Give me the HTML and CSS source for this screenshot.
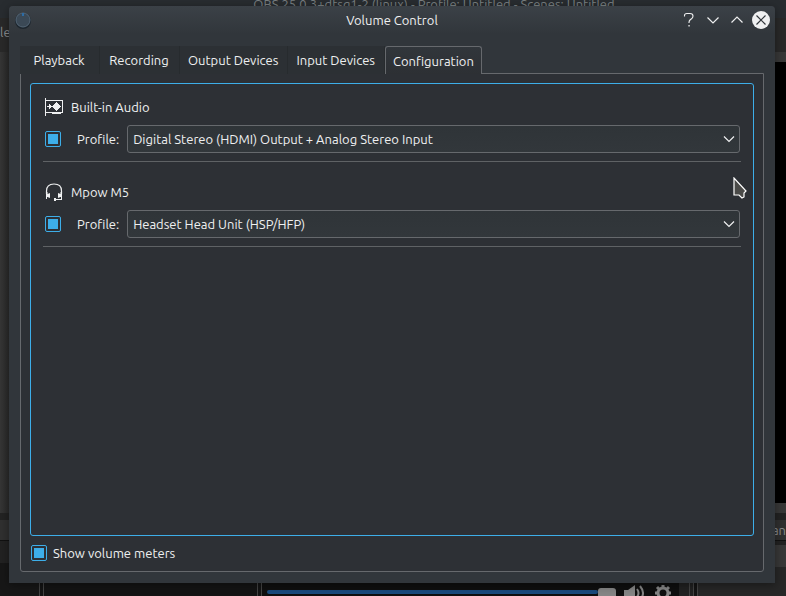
FILE: index.html
```html
<!DOCTYPE html>
<html lang="en">
<head>
<meta charset="utf-8">
<title>Volume Control</title>
<link rel="stylesheet" href="styles.css">
</head>
<body>
<div class="backdrop">
  <div class="back-title">OBS 25.0.3+dtsg1-2 (linux) - Profile: Untitled - Scenes: Untitled</div>
  <div class="back-menu">le</div>
  <div class="back-main">
    <div class="back-left"></div>
    <div class="back-preview"></div>
  </div>
  <div class="back-gap"></div>
  <div class="back-heads"><span>an</span></div>
  <div class="back-docks">
    <div class="dock dock-scenes"></div>
    <div class="dock dock-sources"></div>
    <div class="dock dock-mixer">
      <div class="track"></div>
      <div class="handle"></div>
      <svg class="speaker" width="24" height="18" viewBox="0 0 24 18"><path d="M1 6h4l7-5v16l-7-5H1z" fill="#858585"/><path d="M14 5q3 4 0 8M17 2q6 7 0 14" fill="none" stroke="#858585" stroke-width="2"/></svg>
      <svg class="gear" width="18" height="18" viewBox="0 0 18 18"><circle cx="9" cy="9" r="5" fill="none" stroke="#858585" stroke-width="3"/><path d="M9 1v3M9 14v3M1 9h3M14 9h3M3 3l2.500 2.500M12.500 12.500l2.500 2.500M15 3l-2.500 2.500M5.500 12.500l-2.500 2.500" stroke="#858585" stroke-width="3"/></svg>
      <div class="scroll"></div>
    </div>
    <div class="dock dock-transitions"></div>
    <div class="dock dock-controls"></div>
  </div>
</div>

<main class="window">
  <header class="titlebar">
    <svg class="app-icon" width="18" height="18" viewBox="0 0 18 18"><circle cx="9" cy="10" r="8" fill="#1d262e"/><circle cx="9" cy="9" r="7" fill="#3b4956" stroke="#536575"/><path d="M9 2v3" stroke="#2d6ca5" stroke-width="2"/></svg>
    <h1>Volume Control</h1>
    <div class="window-buttons">
      <button aria-label="Help"><svg width="18" height="18" viewBox="0 0 18 18"><path d="M4.500 5.500V4.500Q4.500 2.500 7 2.500H10Q13 2.500 13 5Q13 6.500 11.500 7.800L10 9Q9 10 9 11.500V12" fill="none" stroke="#eff0f1" stroke-width="1.100"/><path d="M8.400 14h1.300v1.500h-1.300z" fill="#eff0f1"/></svg></button>
      <button aria-label="Minimize"><svg width="18" height="18" viewBox="0 0 18 18"><path d="M3.500 6.500L9 12l5.500-5.500" fill="none" stroke="#eff0f1" stroke-width="1.200"/></svg></button>
      <button aria-label="Maximize"><svg width="18" height="18" viewBox="0 0 18 18"><path d="M3.500 11.500L9 6l5.500 5.500" fill="none" stroke="#eff0f1" stroke-width="1.200"/></svg></button>
      <button aria-label="Close"><svg width="18" height="18" viewBox="0 0 18 18"><circle cx="9" cy="9" r="9" fill="#eff0f1"/><path d="M4.500 4.500l9 9M13.500 4.500l-9 9" stroke="#31363b" stroke-width="1.200"/></svg></button>
    </div>
  </header>

  <div class="tabs" role="tablist">
    <button class="tab" role="tab">Playback</button>
    <button class="tab" role="tab">Recording</button>
    <button class="tab" role="tab">Output Devices</button>
    <button class="tab" role="tab">Input Devices</button>
    <button class="tab active" role="tab" aria-selected="true">Configuration</button>
  </div>

  <section class="page">
    <div class="cards">
      <section class="card">
        <h2>
          <svg width="18" height="18" viewBox="0 0 18 18" shape-rendering="crispEdges"><path d="M0 0h1v18H0zM1 2h17v1H1zM17 2h1v12h-1zM1 14h17v1H1zM7 15h9v1H7zM2 8h14v1H2zM4 6h1v5H4zM5 7h1v3H5zM10 5h3v7h-3zM9 6h5v5H9zM8 7h7v3H8zM11 4h1v9h-1z" fill="#eff0f1"/></svg>
          Built-in Audio
        </h2>
        <div class="profile">
          <input type="checkbox" checked aria-label="Lock Built-in Audio">
          <label for="profile-1">Profile:</label>
          <div class="select">
            <select id="profile-1"><option>Digital Stereo (HDMI) Output + Analog Stereo Input</option></select>
            <svg width="12" height="8" viewBox="0 0 12 8"><path d="M1 1.500l5 5 5-5" fill="none" stroke="#eff0f1" stroke-width="1.200"/></svg>
          </div>
        </div>
      </section>
      <section class="card">
        <h2>
          <svg width="18" height="18" viewBox="0 0 18 18"><path d="M1.500 11V8Q1.500 1 9 1T16.500 8V11" fill="none" stroke="#eff0f1" stroke-width="1.200"/><path d="M1 9h1.500v2l2.500-1v5l-2.500-1H2v2H1zM17 9h-1.500v2L13 10v5l2.500-1H16v2h-5v-1H9v3h2v-1h6z" fill="#eff0f1"/></svg>
          Mpow M5
        </h2>
        <div class="profile">
          <input type="checkbox" checked aria-label="Lock Mpow M5">
          <label for="profile-2">Profile:</label>
          <div class="select">
            <select id="profile-2"><option>Headset Head Unit (HSP/HFP)</option></select>
            <svg width="12" height="8" viewBox="0 0 12 8"><path d="M1 1.500l5 5 5-5" fill="none" stroke="#eff0f1" stroke-width="1.200"/></svg>
          </div>
        </div>
      </section>
    </div>
    <label class="meters"><input type="checkbox" checked>Show volume meters</label>
  </section>
</main>

<svg class="cursor" width="14" height="22" viewBox="0 0 14 22"><path d="M1 1v17h5l3 3 2-1v-4l2-2z" fill="#4a4a48" stroke="#fff" stroke-width="1.200"/></svg>
</body>
</html>
```
FILE: styles.css
```css
* { box-sizing: border-box; }

body {
  margin: 0;
  height: 100vh;
  padding: 6px 11px 13px 9px;
  display: flex;
  overflow: hidden;
  background: #141414;
  color: #eff0f1;
  font: 13px/20px Ubuntu, "Noto Sans", sans-serif;
}

h1, h2 { margin: 0; font-size: 13px; font-weight: 400; }
svg { display: block; flex: none; }

button {
  padding: 0;
  border: 0;
  background: none;
  color: inherit;
  font: inherit;
}

/* Application behind the dialog */
.backdrop {
  position: absolute;
  inset: 0;
  display: flex;
  flex-direction: column;
  overflow: hidden;
  color: #8b8d8f;
}
.back-title {
  height: 18px;
  flex: none;
  background: #282c30;
  color: #7a8082;
  line-height: 8px;
  text-align: center;
  padding-left: 82px;
}
.back-menu { height: 34px; flex: none; background: #292929; line-height: 28px; }
.back-main { flex: 1; display: flex; justify-content: space-between; background: #383838; }
.back-left { width: 9px; background: linear-gradient(90deg, #363636, #2a2a2a); }
.back-preview { width: 50%; margin: 10px 0; background: #000; }
.back-gap { height: 7px; flex: none; background: #232323; }
.back-heads { height: 20px; flex: none; background: #303030; text-align: right; }
.back-docks { height: 56px; flex: none; display: flex; background: #141414; border-top: 1px solid #111; }
.dock { border-right: 1px solid #444; }
.dock-scenes { width: 40px; background: linear-gradient(#222 22px, #171717 22px); }
.dock-sources { width: 215px; margin-left: 3px; border-left: 1px solid #444; }
.dock-mixer {
  flex: 1;
  display: flex;
  align-items: center;
  gap: 7px;
  margin-left: 3px;
  padding: 47px 0 0 5px;
  border-left: 1px solid #444;
  background: #0f0f0f;
}
.track { flex: 1; height: 4px; border-radius: 2px; background: #194a7d; }
.handle { width: 18px; height: 12px; margin: 3px 0 0 -7px; border-radius: 3px; background: #858585; }
.speaker, .gear { margin-top: 2px; }
.scroll { width: 10px; height: 20px; background: #222; }
.dock-transitions { width: 4px; background: #222; }
.dock-controls { width: 89px; margin-left: 3px; border: 0; border-left: 1px solid #444; background: linear-gradient(#222 4px, #383838 4px, #383838 26px, #272727 26px); }

/* Dialog */
.window {
  position: relative;
  flex: 1;
  display: flex;
  flex-direction: column;
  padding: 0 11px 11px;
  border-radius: 4px 4px 0 0;
  background: linear-gradient(#3b4147, #31363b 28px);
  box-shadow: 0 2px 10px rgba(0, 0, 0, .4);
}
.titlebar {
  display: grid;
  grid-template-columns: 1fr auto 1fr;
  align-items: center;
  height: 28px;
  margin: 0 -6px 12px;
}
.window-buttons { display: flex; justify-content: flex-end; gap: 6px; }

.tabs { display: flex; height: 28px; margin-bottom: -1px; position: relative; }
.tab {
  min-width: 80px;
  padding: 0 9px 0 8px;
  border-right: 1px solid #272b2e;
  background: #2c3034;
}
.tab.active {
  border: 1px solid #66696d;
  border-bottom: 0;
  border-radius: 3px 3px 0 0;
  padding: 0 7px;
  background: linear-gradient(#31363b, #2d3034);
}

.page {
  flex: 1;
  display: flex;
  flex-direction: column;
  padding: 9px 9px 8px;
  border: 1px solid #66696d;
  border-radius: 0 0 3px 3px;
  background: #2d3035;
}
.cards {
  flex: 1;
  padding: 13px 12px;
  border: 1px solid #3daee9;
  border-radius: 3px;
}
.card { padding-bottom: 8px; margin-bottom: 20px; border-bottom: 1px solid #5f6265; }
.card h2 { display: flex; align-items: center; gap: 8px; padding-left: 2px; line-height: 20px; }
.profile { display: flex; align-items: center; margin-top: 8px; padding: 0 1px 0 2px; }
.profile label { margin: 0 8px 0 16px; }

input[type="checkbox"] {
  appearance: none;
  width: 16px;
  height: 16px;
  margin: 0;
  padding: 2px;
  border: 1px solid #3daee9;
  border-radius: 2px;
  background: #3daee9 content-box;
}

.select { flex: 1; display: grid; align-items: center; }
.select select {
  grid-area: 1 / 1;
  appearance: none;
  width: 100%;
  height: 28px;
  padding: 0 24px 0 5px;
  border: 1px solid #66696d;
  border-radius: 3px;
  background: linear-gradient(#2f3438, #32373b);
  color: inherit;
  font: inherit;
}
.select svg { grid-area: 1 / 1; justify-self: end; margin-right: 5px; pointer-events: none; }

.meters { display: flex; align-items: center; gap: 6px; margin-top: 7px; padding-left: 1px; line-height: 20px; }

.cursor { position: absolute; left: 733px; top: 177px; }
```
